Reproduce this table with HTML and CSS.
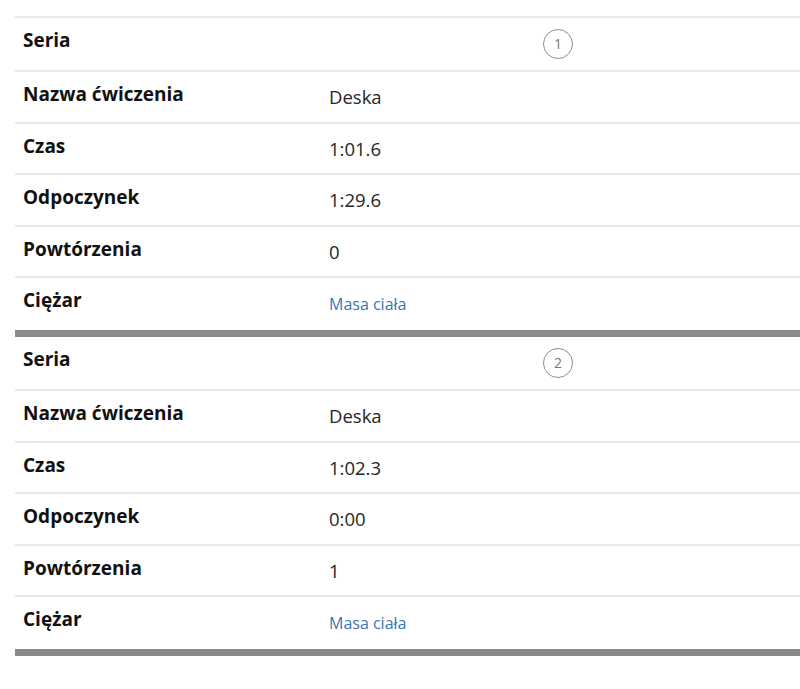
FILE: index.html
```html
<!DOCTYPE html>
<html lang="pl">
<head>
<meta charset="utf-8">
<title>Serie</title>
<link rel="stylesheet" href="styles.css">
</head>
<body>
<div class="list">
  <div class="spacer"></div>

  <section class="block">
    <div class="row row-head">
      <div class="label">Seria</div>
      <div class="value value-center"><span class="badge">1</span></div>
    </div>
    <div class="row h52">
      <div class="label">Nazwa ćwiczenia</div>
      <div class="value">Deska</div>
    </div>
    <div class="row h51">
      <div class="label">Czas</div>
      <div class="value">1:01.6</div>
    </div>
    <div class="row h52">
      <div class="label">Odpoczynek</div>
      <div class="value">1:29.6</div>
    </div>
    <div class="row h51">
      <div class="label">Powtórzenia</div>
      <div class="value">0</div>
    </div>
    <div class="row row-last">
      <div class="label">Ciężar</div>
      <div class="value link">Masa ciała</div>
    </div>
  </section>

  <section class="block">
    <div class="row row-head">
      <div class="label">Seria</div>
      <div class="value value-center"><span class="badge">2</span></div>
    </div>
    <div class="row h52">
      <div class="label">Nazwa ćwiczenia</div>
      <div class="value">Deska</div>
    </div>
    <div class="row h51">
      <div class="label">Czas</div>
      <div class="value">1:02.3</div>
    </div>
    <div class="row h52">
      <div class="label">Odpoczynek</div>
      <div class="value">0:00</div>
    </div>
    <div class="row h51">
      <div class="label">Powtórzenia</div>
      <div class="value">1</div>
    </div>
    <div class="row row-last">
      <div class="label">Ciężar</div>
      <div class="value link">Masa ciała</div>
    </div>
  </section>
</div>
</body>
</html>
```

FILE: styles.css
```css
* {
  box-sizing: border-box;
}

html, body {
  margin: 0;
  padding: 0;
  background: #ffffff;
}

body {
  font-family: "Open Sans", "Noto Sans", sans-serif;
  color: #222222;
}

.list {
  margin-left: 15px;
}

.spacer {
  height: 18px;
  border-bottom: 2px solid #e8e8e8;
}

.row {
  display: grid;
  grid-template-columns: 314px 458px;
  border-bottom: 2px solid #e8e8e8;
}

.row-head {
  height: 54px;
}

.h52 {
  height: 52px;
}

.h51 {
  height: 51px;
}

.row-last {
  height: 59px;
  border-bottom: 7px solid #8a8a8a;
}

.label {
  padding-left: 8px;
  padding-top: 9px;
  font-size: 19px;
  line-height: 26px;
  font-weight: 700;
  color: #111111;
}

.value {
  padding-top: 12px;
  font-size: 18.5px;
  line-height: 26px;
  color: #262626;
}

.value-center {
  display: flex;
  justify-content: center;
  padding-top: 11px;
}

.badge {
  width: 30px;
  height: 30px;
  border: 1.5px solid #8e8e8e;
  border-radius: 50%;
  display: flex;
  align-items: center;
  justify-content: center;
  font-size: 14px;
  line-height: 1;
  color: #7a7a7a;
}

.link {
  padding-top: 13px;
  font-size: 16px;
  color: #3776b3;
}
```
